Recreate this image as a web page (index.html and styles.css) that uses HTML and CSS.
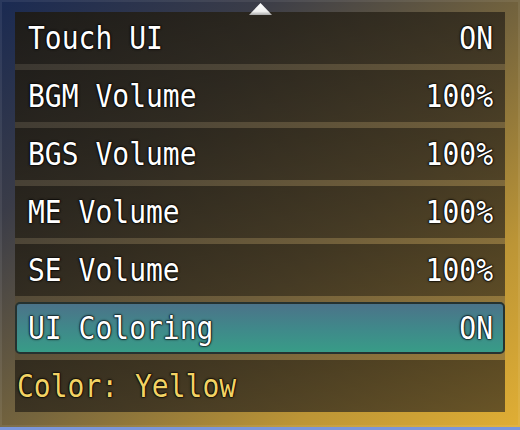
FILE: index.html
```html
<!DOCTYPE html>
<html>
<head>
<meta charset="utf-8">
<link rel="stylesheet" href="styles.css">
</head>
<body>
<div class="window">
  <svg class="arrow" width="23" height="12" viewBox="0 0 23 12">
    <defs>
      <linearGradient id="ag" x1="0" y1="0" x2="0" y2="1">
        <stop offset="0" stop-color="#ffffff"/>
        <stop offset="0.7" stop-color="#f0f0f0"/>
        <stop offset="1" stop-color="#a8a8a8"/>
      </linearGradient>
    </defs>
    <polygon points="11.5,0 23,12 0,12" fill="url(#ag)"/>
  </svg>
  <ul class="list">
    <li class="row"><span class="label">Touch UI</span><span class="value">ON</span></li>
    <li class="row"><span class="label">BGM Volume</span><span class="value">100%</span></li>
    <li class="row"><span class="label">BGS Volume</span><span class="value">100%</span></li>
    <li class="row"><span class="label">ME Volume</span><span class="value">100%</span></li>
    <li class="row"><span class="label">SE Volume</span><span class="value">100%</span></li>
    <li class="row selected"><span class="label">UI Coloring</span><span class="value">ON</span></li>
    <li class="row note"><span class="label yellow">Color: Yellow</span></li>
  </ul>
</div>
</body>
</html>
```

FILE: styles.css
```css
html, body {
  margin: 0;
  padding: 0;
}
body {
  width: 520px;
  height: 430px;
  overflow: hidden;
  background: #7b96da;
  font-family: "DejaVu Sans Mono", "Liberation Mono", monospace;
}
.window {
  position: relative;
  box-sizing: border-box;
  width: 520px;
  height: 427px;
  padding: 12px 15px 15px 15px;
  background: linear-gradient(to bottom right, #1a2a52 0%, #3a3c48 25%, #76653d 52%, #bc9536 78%, #e0ae34 100%);
  box-shadow: inset 0 0 0 2px rgba(255, 255, 255, 0.07);
}
.arrow {
  position: absolute;
  top: 3px;
  left: 249px;
  z-index: 2;
}
.list {
  list-style: none;
  margin: 0;
  padding: 0;
  display: flex;
  flex-direction: column;
  gap: 6px;
  background: linear-gradient(to bottom right, #36332f 0%, #4e4637 30%, #6f5e3b 60%, #a4843c 100%);
}
.row {
  box-sizing: border-box;
  height: 52px;
  display: flex;
  align-items: center;
  justify-content: space-between;
  padding: 0 12px 0 13px;
  background: linear-gradient(to bottom right, rgba(0, 0, 0, 0.46), rgba(0, 0, 0, 0.36));
  color: #ffffff;
  font-size: 28px;
  text-shadow: 0 0 2px #000, 0 0 2px #000, 0 0 1px #000, 0 0 1px #000;
}
.row.selected {
  padding: 0 10px 0 11px;
  border: 2px solid #253230;
  border-radius: 5px;
  background: linear-gradient(to bottom, #4b7389 0%, #3f8a8a 55%, #389c87 100%);
}
.row.note {
  padding-left: 2px;
}
.yellow {
  color: #f2d264;
}
.label, .value {
  display: inline-block;
  white-space: pre;
  transform: scaleY(1.12);
}
```
